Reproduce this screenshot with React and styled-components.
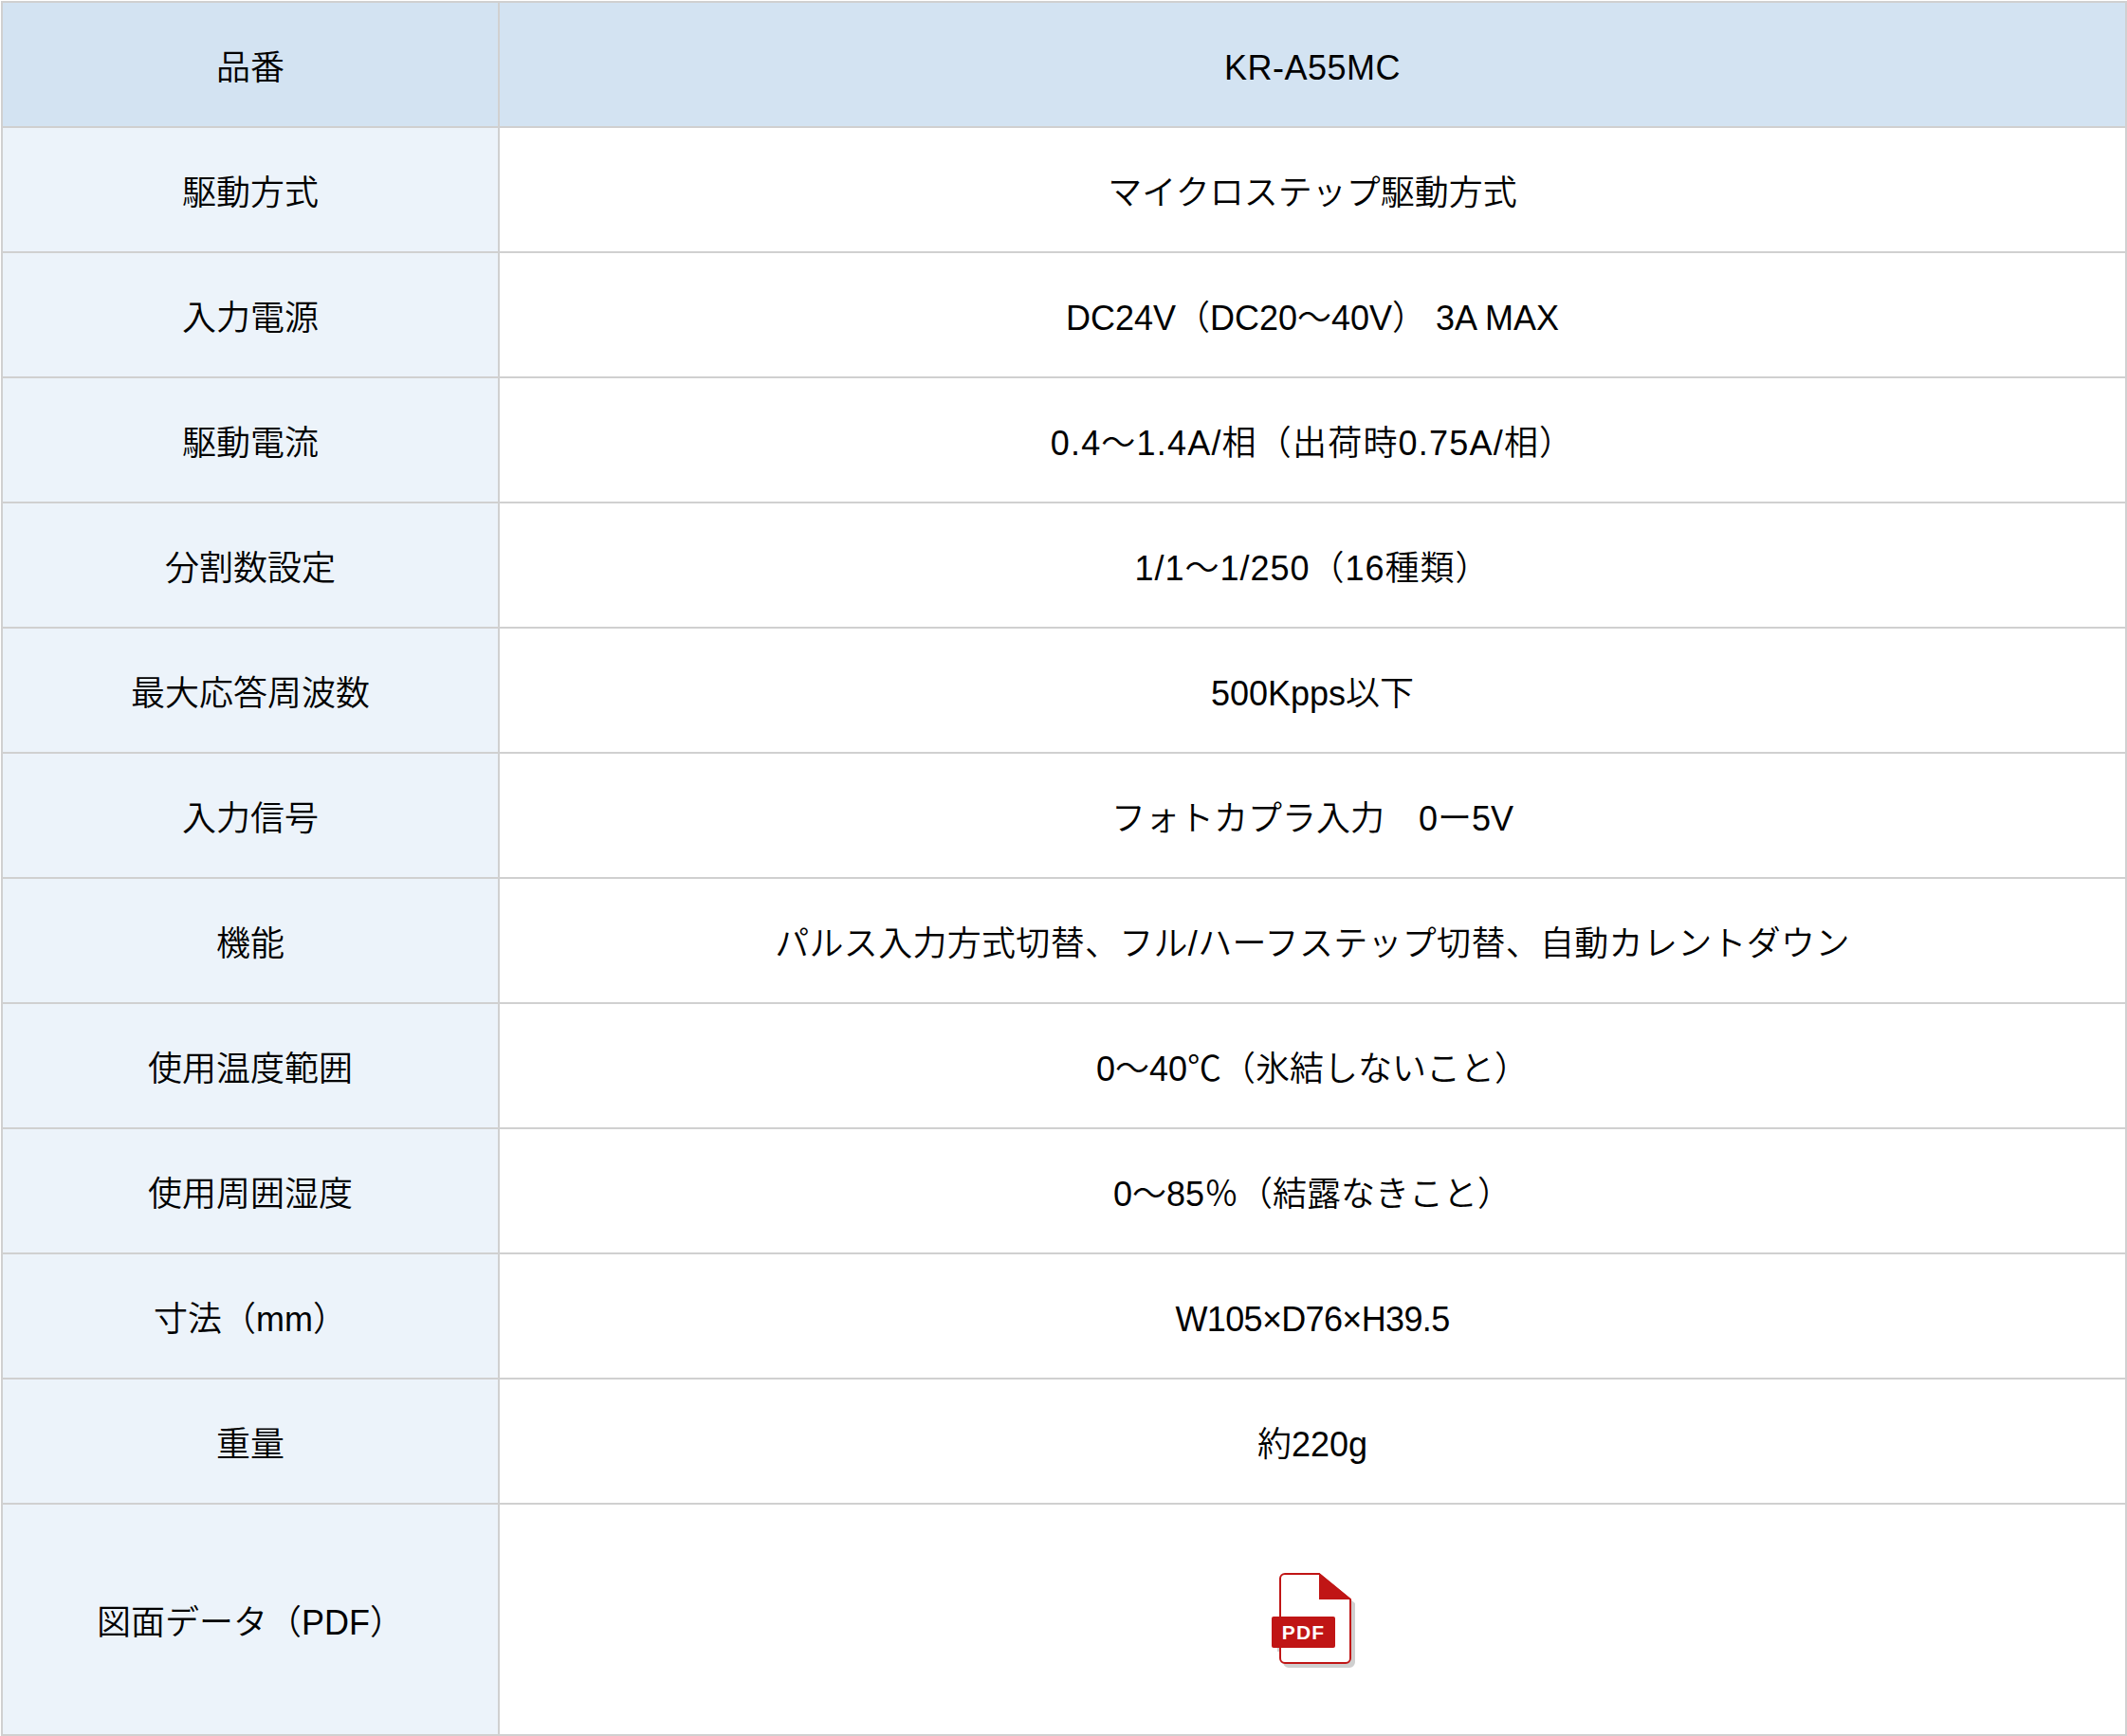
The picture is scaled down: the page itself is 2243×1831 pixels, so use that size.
import React from 'react';
import styled, { createGlobalStyle } from 'styled-components';

const GlobalStyle = createGlobalStyle`
  html, body {
    margin: 0;
    padding: 0;
    background: #fff;
  }
`;

const SpecTable = styled.table`
  width: 2242px;
  table-layout: fixed;
  border-collapse: collapse;
  margin: 1px 0 0 1px;
  font-family: "Liberation Sans", "Noto Sans CJK JP", sans-serif;
  font-size: 36px;
  font-weight: 350;
  line-height: 1.4;
  color: #000;
  text-align: center;
`;

const LabelCol = styled.col`
  width: 524px;
`;

const Row = styled.tr`
  height: ${(p) => p.$height || 132}px;
`;

const Label = styled.th`
  padding: 8px 0 0;
  font-weight: 350;
  border: 2px solid #d0d0d0;
  background: ${(p) => (p.$head ? '#d3e3f2' : '#ecf3fa')};
`;

const Value = styled.td`
  padding: ${(p) => (p.$flush ? '0' : '8px 0 0')};
  border: 2px solid #d0d0d0;
  letter-spacing: ${(p) => p.$track || 0}px;
  background: ${(p) => (p.$head ? '#d3e3f2' : '#fff')};
`;

const PdfIcon = styled.svg`
  display: block;
  width: 94px;
  height: 104px;
  margin: 2px auto 0;
`;

const PdfMark = () => (
  <PdfIcon viewBox="-2 0 94 104" aria-label="PDF">
    <path d="M18 6h38l34 28v62a6 6 0 0 1-6 6H20a6 6 0 0 1-6-6V85H8V52h10z" fill="#cfcfcf" />
    <path d="M16 3h36l33 27v62a5 5 0 0 1-5 5H16a5 5 0 0 1-5-5V8a5 5 0 0 1 5-5z" fill="#fff" stroke="#c01515" strokeWidth="2" />
    <path d="M52 2l34 28H52z" fill="#c01515" />
    <rect x="2" y="48" width="67" height="33" rx="2" fill="#c01515" />
    <text x="35.5" y="71.5" textAnchor="middle" fill="#fff" fontFamily="'Liberation Sans', sans-serif" fontWeight="700" fontSize="21" letterSpacing="1.2">PDF</text>
  </PdfIcon>
);

const specs = [
  { label: '駆動方式', value: 'マイクロステップ駆動方式' },
  { label: '入力電源', value: 'DC24V（DC20～40V） 3A MAX' },
  { label: '駆動電流', value: '0.4～1.4A/相（出荷時0.75A/相）', track: 1.2 },
  { label: '分割数設定', value: '1/1～1/250（16種類）', track: 1 },
  { label: '最大応答周波数', value: '500Kpps以下' },
  { label: '入力信号', value: 'フォトカプラ入力　0ー5V' },
  { label: '機能', value: 'パルス入力方式切替、フル/ハーフステップ切替、自動カレントダウン', track: 0.3 },
  { label: '使用温度範囲', value: '0～40℃（氷結しないこと）' },
  { label: '使用周囲湿度', value: '0～85％（結露なきこと）' },
  { label: '寸法（mm）', value: 'W105×D76×H39.5', track: -0.65 },
  { label: '重量', value: '約220g' },
];

export default function App() {
  return (
    <>
      <GlobalStyle />
      <SpecTable>
        <colgroup>
          <LabelCol />
          <col />
        </colgroup>
        <tbody>
          <Row>
            <Label $head>品番</Label>
            <Value $head $track={0.5}>KR-A55MC</Value>
          </Row>
          {specs.map((s) => (
            <Row key={s.label}>
              <Label>{s.label}</Label>
              <Value $track={s.track}>{s.value}</Value>
            </Row>
          ))}
          <Row $height={244}>
            <Label>図面データ（PDF）</Label>
            <Value $flush>
              <PdfMark />
            </Value>
          </Row>
        </tbody>
      </SpecTable>
    </>
  );
}
